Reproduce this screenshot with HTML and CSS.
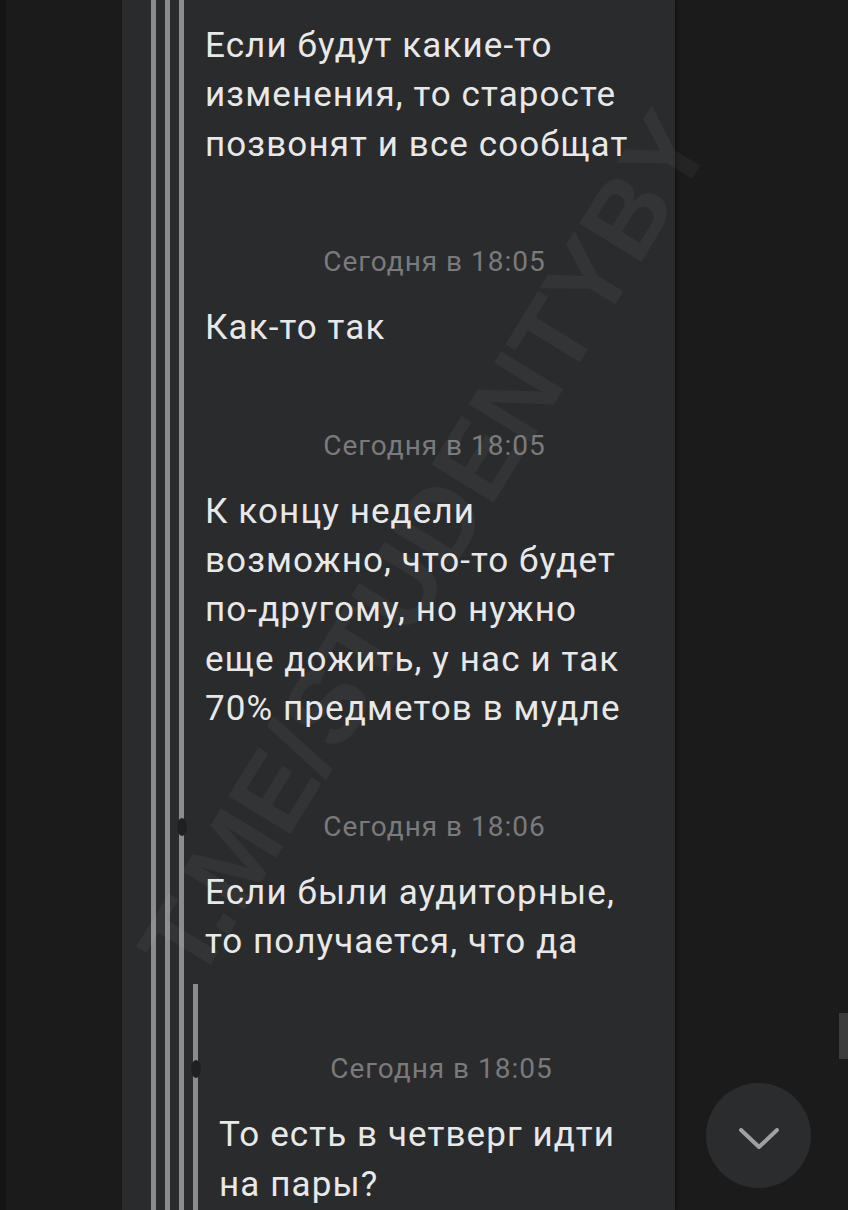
FILE: index.html
```html
<!DOCTYPE html>
<html lang="ru">
<head>
    <meta charset="UTF-8">
    <meta name="viewport" content="width=device-width, initial-scale=1.0">
    <title>Переписка</title>
    <link rel="stylesheet" href="styles.css">
</head>
<body>

    <div class="screen">
        <div class="thread">
            <div class="quote">
                <div class="quote">
                    <div class="quote inner">

                        <div class="msg">
                            <div class="text">Если будут какие-то<br>изменения, то старосте<br>позвонят и все сообщат</div>
                        </div>

                        <div class="msg">
                            <div class="time">Сегодня в 18:05</div>
                            <div class="text">Как-то так</div>
                        </div>

                        <div class="msg">
                            <div class="time">Сегодня в 18:05</div>
                            <div class="text">К концу недели<br>возможно, что-то будет<br>по-другому, но нужно<br>еще дожить, у нас и так<br>70% предметов в мудле</div>
                        </div>

                        <div class="msg">
                            <span class="dot"></span>
                            <div class="time">Сегодня в 18:06</div>
                            <div class="text">Если были аудиторные,<br>то получается, что да</div>
                        </div>

                        <div class="quote nested">
                            <div class="msg">
                                <span class="dot"></span>
                                <div class="time">Сегодня в 18:05</div>
                                <div class="text">То есть в четверг идти<br>на пары?</div>
                            </div>
                        </div>

                    </div>
                </div>
            </div>
        </div>

        <div class="watermark">T.ME/STUDENTYBY</div>

        <button class="scroll-down" aria-label="Вниз">
            <svg width="40" height="22" viewBox="0 0 40 22">
                <polyline points="2,2 20,19 38,2" fill="none" stroke="#a0a0a2" stroke-width="4" stroke-linecap="round" stroke-linejoin="round"/>
            </svg>
        </button>

        <div class="scrollbar"></div>
    </div>

</body>
</html>
```

FILE: styles.css
```css
body {
    margin: 0;
    background-color: #1b1b1b;
    font-family: Roboto, "Noto Sans", sans-serif;
}
.screen {
    position: relative;
    width: 848px;
    height: 1210px;
    overflow: hidden;
    background-color: #1b1b1b;
    border-left: 6px solid #151515;
    box-sizing: border-box;
}
.thread {
    margin-left: 116px;
    width: 553px;
    height: 100%;
    padding: 0 11px 0 29px;
    box-sizing: border-box;
    background-color: #2a2b2d;
    box-shadow: 2px 0 3px rgba(0, 0, 0, 0.35);
    overflow: hidden;
}
.quote {
    border-left: 5px solid #8c8c8e;
    padding-left: 9px;
}
.quote.inner {
    padding-top: 21px;
}
.quote.nested {
    margin-top: 18px;
    padding-top: 70px;
    padding-bottom: 40px;
}
.msg {
    position: relative;
    padding-left: 12px;
}
.msg + .msg {
    margin-top: 78px;
}
.time {
    height: 30px;
    line-height: 30px;
    font-size: 28px;
    letter-spacing: 1px;
    color: #7a7a7c;
    text-align: center;
    margin-bottom: 26px;
}
.text {
    font-size: 35px;
    line-height: 49.4px;
    letter-spacing: 1.1px;
    color: #e8e8e8;
    white-space: nowrap;
}
.dot {
    position: absolute;
    left: -16px;
    top: 6px;
    width: 10px;
    height: 18px;
    border-radius: 50%;
    background-color: #1f2022;
}
.watermark {
    position: absolute;
    left: 419px;
    top: 545px;
    transform: translate(-50%, -50%) rotate(-58.5deg);
    font-family: "Liberation Sans", Arial, sans-serif;
    font-weight: bold;
    font-size: 106px;
    white-space: nowrap;
    color: rgba(255, 255, 255, 0.045);
    pointer-events: none;
}
.scroll-down {
    position: absolute;
    left: 700px;
    top: 1083px;
    width: 105px;
    height: 105px;
    border-radius: 50%;
    border: none;
    padding: 0;
    background-color: #2b2c2e;
    display: flex;
    justify-content: center;
    align-items: center;
    padding-top: 6px;
}
.scrollbar {
    position: absolute;
    left: 833px;
    top: 1013px;
    width: 9px;
    height: 46px;
    background-color: #3c3c3c;
}
```
